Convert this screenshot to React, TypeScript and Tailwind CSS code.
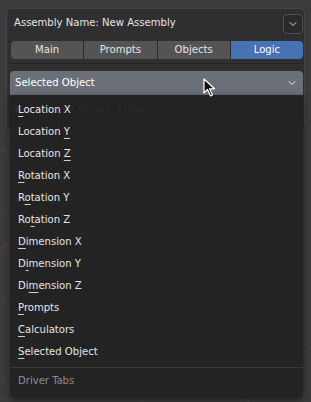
import { ChevronDown } from "lucide-react";

type Item = { pre: string; key: string; post: string };

const items: Item[] = [
    { pre: "", key: "L", post: "ocation X" },
    { pre: "Location ", key: "Y", post: "" },
    { pre: "Location ", key: "Z", post: "" },
    { pre: "", key: "R", post: "otation X" },
    { pre: "R", key: "o", post: "tation Y" },
    { pre: "Ro", key: "t", post: "ation Z" },
    { pre: "", key: "D", post: "imension X" },
    { pre: "D", key: "i", post: "mension Y" },
    { pre: "Di", key: "m", post: "ension Z" },
    { pre: "", key: "P", post: "rompts" },
    { pre: "", key: "C", post: "alculators" },
    { pre: "", key: "S", post: "elected Object" },
];

const tabs = ["Main", "Prompts", "Objects", "Logic"];

function Cursor() {
    return (
        <svg width="14" height="20" viewBox="0 0 14 20" className="absolute left-[203px] top-[78px] z-30">
            <path d="M1 1 L1 15 L4.5 11.5 L7.5 18 L9.5 17 L6.5 10.8 L11.5 10.8 Z" fill="#111" stroke="#fff" strokeWidth="1.2" strokeLinejoin="round" />
        </svg>
    );
}

export default function App() {
    return (
        <div
            className="relative w-[311px] h-[402px] overflow-hidden bg-[#3b3b3b] text-[11.2px] text-[#e5e5e5]"
            style={{ fontFamily: '"DejaVu Sans Condensed", "DejaVu Sans", sans-serif' }}
        >
            {/* viewport grid */}
            <svg className="absolute inset-0" width="311" height="402">
                <g stroke="#444" strokeWidth="1">
                    <line x1="0" y1="150" x2="40" y2="160" />
                    <line x1="0" y1="215" x2="30" y2="205" />
                    <line x1="0" y1="300" x2="25" y2="310" />
                    <line x1="0" y1="380" x2="20" y2="372" />
                    <line x1="140" y1="402" x2="160" y2="392" />
                    <line x1="250" y1="402" x2="230" y2="395" />
                    <line x1="311" y1="300" x2="303" y2="310" />
                    <line x1="311" y1="350" x2="303" y2="343" />
                </g>
                <line x1="0" y1="250" x2="12" y2="240" stroke="#7a3a3a" strokeWidth="1" />
            </svg>

            {/* panel */}
            <div className="relative mx-[6px] mt-[8px] h-[122px] rounded-[5px] border border-[#454545] bg-[#2f2f2f]">
                <div className="flex h-[29px] items-center justify-between pl-[7px] pr-[1px]">
                    <span>Assembly Name: New Assembly</span>
                    <div className="flex h-[20px] w-[20px] items-center justify-center rounded-[4px] border border-[#4f4f4f] bg-[#2a2a2a]">
                        <ChevronDown size={12} strokeWidth={2} className="text-[#d8d8d8]" />
                    </div>
                </div>
                <div className="mt-[3px] ml-[4px] mr-[1px] grid h-[18px] grid-cols-4 gap-px overflow-hidden rounded-[4px] bg-[#2a2a2a]">
                    {tabs.map(t => (
                        <div
                            key={t}
                            className={
                                t === "Logic"
                                    ? "flex items-center justify-center bg-[#4772b3] text-white"
                                    : "flex items-center justify-center bg-[#545454] text-[#e5e5e5]"
                            }
                        >
                            {t}
                        </div>
                    ))}
                </div>
                <div className="mt-[4px] h-px bg-[#262626]" />
                <div className="mt-[7px] ml-[3px] mr-[1px] flex h-[24px] items-center justify-between rounded-t-[4px] bg-[#6b6f78] px-[5px] text-white">
                    <span>Selected Object</span>
                    <ChevronDown size={12} strokeWidth={2} className="text-[#e8e8e8]" />
                </div>
                <div className="mt-[7px] flex items-center pl-[6px] text-[#9a9a9a]">
                    <span className="w-[10px] text-[10px] leading-none">▼</span>
                    <span className="ml-[14px]">Current Object: Cube</span>
                </div>
            </div>

            {/* open menu */}
            <div className="absolute left-[10px] top-[95px] z-20 w-[293px] rounded-b-[5px] bg-[#212121]/[0.93] pt-[2px] pb-[3px] shadow-[0_2px_6px_rgba(0,0,0,0.5)]">
                {items.map((it, i) => (
                    <div key={i} className="flex h-[22px] items-center pl-[8px] pt-[4px] text-[#e5e5e5]">
                        <span>
                            {it.pre}
                            <span className="underline decoration-[#cfcfcf] underline-offset-[3px]">{it.key}</span>
                            {it.post}
                        </span>
                    </div>
                ))}
                <div className="mt-[6px] h-px bg-[#3a3a3a]" />
                <div className="flex h-[27px] items-center pl-[8px] text-[#8c8c8c]">Driver Tabs</div>
            </div>

            <Cursor />
        </div>
    );
}
